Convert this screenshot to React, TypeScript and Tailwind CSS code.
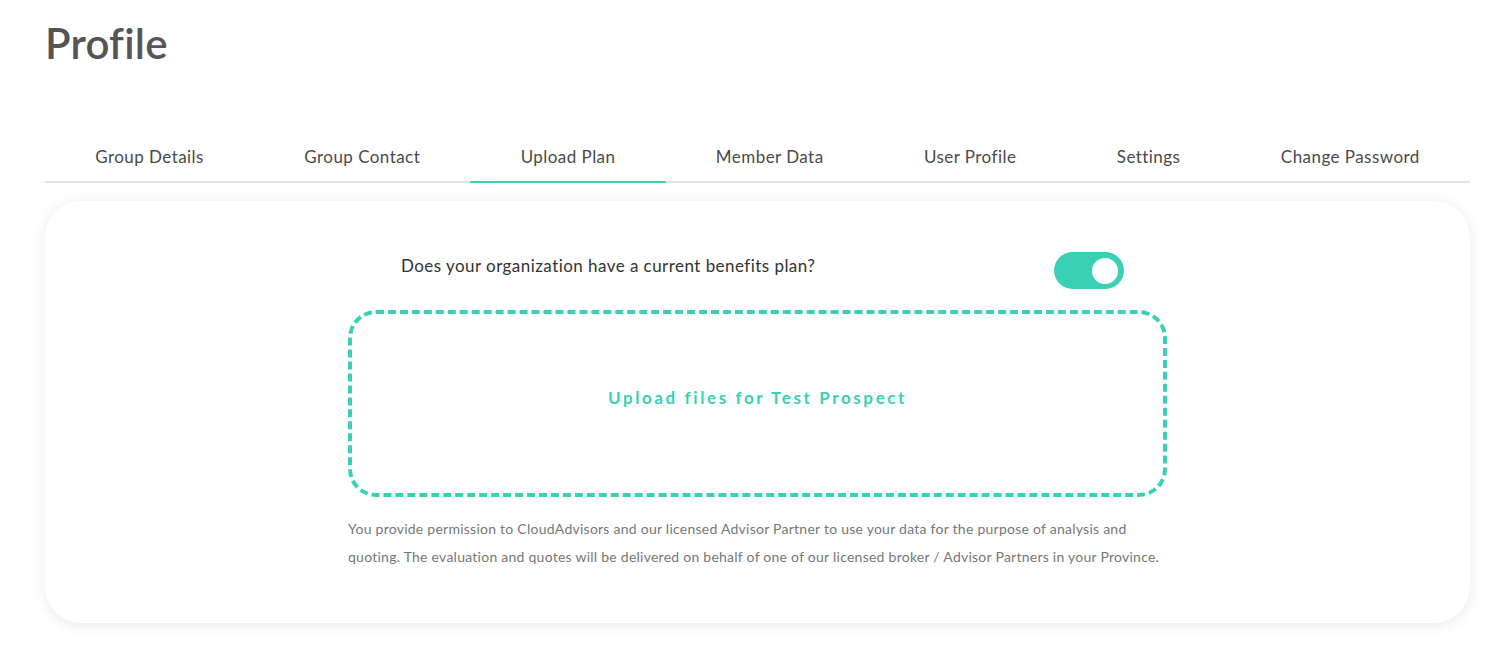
import React, { useState } from "react";

const tabs = [
  "Group Details",
  "Group Contact",
  "Upload Plan",
  "Member Data",
  "User Profile",
  "Settings",
  "Change Password",
];

export default function App() {
  const [on, setOn] = useState(true);
  return (
    <div className="min-h-[645px] w-full bg-white pl-[45px] pr-[27px] pt-[18px] font-['Lato','Noto_Sans',sans-serif] text-[#555]">
      <h1 className="text-[42px] font-semibold leading-[50px] tracking-[0.2px] text-[#555]">Profile</h1>

      <div className="mt-[75px] flex border-b-2 border-[#dee2e6]">
        {tabs.map((t) => {
          const active = t === "Upload Plan";
          return (
            <div
              key={t}
              className={
                "-mb-[2px] flex-auto px-[20px] pb-[12px] pt-[2px] text-center text-[17px] leading-[24px] tracking-[0.45px] text-[#4a4a4a] " +
                (active ? "border-b-2 border-[#3ad0b5]" : "border-b-2 border-transparent")
              }
            >
              {t}
            </div>
          );
        })}
      </div>

      <div className="mt-[18px] flex h-[422px] flex-col items-center rounded-[36px] bg-white pt-[51px] shadow-[0_2px_14px_rgba(0,0,0,0.09)]">
        <div className="w-[819px]">
          <div className="flex items-center justify-between pl-[53px] pr-[43px]">
            <span className="pb-[10px] text-[17px] leading-[24px] tracking-[0.45px] text-[#333]">
              Does your organization have a current benefits plan?
            </span>
            <button
              onClick={() => setOn(!on)}
              className={
                "flex h-[37px] w-[70px] items-center rounded-full px-[6px] " +
                (on ? "justify-end bg-[#3ad0b5]" : "justify-start bg-[#ccc]")
              }
            >
              <span className="h-[26px] w-[26px] rounded-full bg-white" />
            </button>
          </div>

          <div className="mt-[21px] flex h-[187px] items-center justify-center rounded-[28px] border-4 border-dashed border-[#3ad0b5] pb-[12px]">
            <span className="text-[17px] font-bold tracking-[2.6px] text-[#3ad0b5]">
              Upload files for Test Prospect
            </span>
          </div>

          <p className="mt-[18px] text-[14px] leading-[28px] tracking-[0.25px] text-[#777]">
            You provide permission to CloudAdvisors and our licensed Advisor Partner to use your data for the purpose of analysis and quoting. The evaluation and quotes will be delivered on behalf of one of our licensed broker / Advisor Partners in your Province.
          </p>
        </div>
      </div>
    </div>
  );
}
